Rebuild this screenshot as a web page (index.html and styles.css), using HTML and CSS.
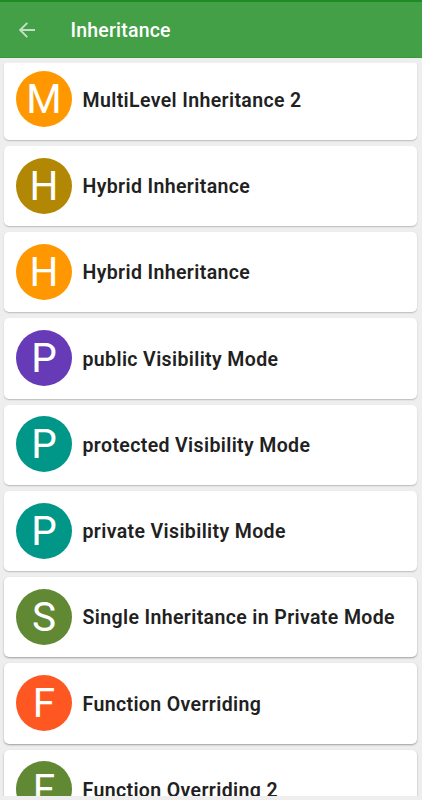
FILE: index.html
```html
<!DOCTYPE html>
<html lang="en">
<head>
<meta charset="utf-8">
<title>Inheritance</title>
<link rel="stylesheet" href="styles.css">
</head>
<body>
<header class="bar">
  <svg class="back" viewBox="0 0 16 16"><path d="M16 8H1.2M8.3 .8L1.1 8l7.2 7.2"/></svg>
  <h1 class="title">Inheritance</h1>
</header>
<main class="list">
  <div class="card first"><span class="avatar orange">M</span><span class="label">MultiLevel Inheritance 2</span></div>
  <div class="card"><span class="avatar gold">H</span><span class="label">Hybrid Inheritance</span></div>
  <div class="card"><span class="avatar orange">H</span><span class="label">Hybrid Inheritance</span></div>
  <div class="card"><span class="avatar purple">P</span><span class="label">public Visibility Mode</span></div>
  <div class="card"><span class="avatar teal">P</span><span class="label">protected Visibility Mode</span></div>
  <div class="card"><span class="avatar teal">P</span><span class="label">private Visibility Mode</span></div>
  <div class="card deep"><span class="avatar green">S</span><span class="label">Single Inheritance in Private Mode</span></div>
  <div class="card deep"><span class="avatar red">F</span><span class="label">Function Overriding</span></div>
  <div class="card deep"><span class="avatar green">F</span><span class="label">Function Overriding 2</span></div>
</main>
</body>
</html>
```
FILE: styles.css
```css
* { box-sizing: border-box; }
body {
  margin: 0;
  height: 800px;
  overflow: hidden;
  background: #eee;
  font-family: Roboto, sans-serif;
}
.bar {
  display: flex;
  align-items: center;
  height: 57.5px;
  padding: 2px 0 0 19px;
  border-top: 2px solid #1f8b24;
  border-bottom: 1px solid #369a3a;
  background: #43a047;
}
.back {
  width: 16px;
  height: 16px;
  fill: none;
  stroke: #c3e0c4;
  stroke-width: 1.9;
}
.title {
  margin: 2px 0 0 35.5px;
  color: #fff;
  font-size: 19.5px;
  font-weight: 500;
  letter-spacing: .2px;
  line-height: 24px;
}
.list {
  height: 733.5px;
  margin-top: 5px;
  padding: 0 4.6px 0 4px;
  overflow: hidden;
}
.card {
  display: flex;
  align-items: center;
  height: 80.25px;
  margin-bottom: 6px;
  padding-left: 12px;
  border-radius: 5px;
  background: #fff;
  box-shadow: 0 1px 1.5px rgba(0, 0, 0, .22);
}
.first {
  height: 77.25px;
  padding-bottom: 3px;
  border-radius: 2px 2px 5px 5px;
}
.deep { box-shadow: 0 1px 2px rgba(0, 0, 0, .34); }
.avatar {
  width: 56px;
  height: 56px;
  margin-top: -.5px;
  flex: none;
  border-radius: 50%;
  color: #fff;
  font-size: 40.5px;
  font-weight: 400;
  line-height: 57px;
  text-align: center;
}
.label {
  margin: 2.5px 0 0 10.5px;
  color: #212121;
  font-size: 19.5px;
  font-weight: 600;
  letter-spacing: .375px;
  line-height: 24px;
  white-space: nowrap;
}
.orange { background: #ff9800; }
.gold { background: #b28704; }
.purple { background: #673ab7; }
.teal { background: #009688; }
.green { background: #618833; }
.red { background: #ff5722; }
```
